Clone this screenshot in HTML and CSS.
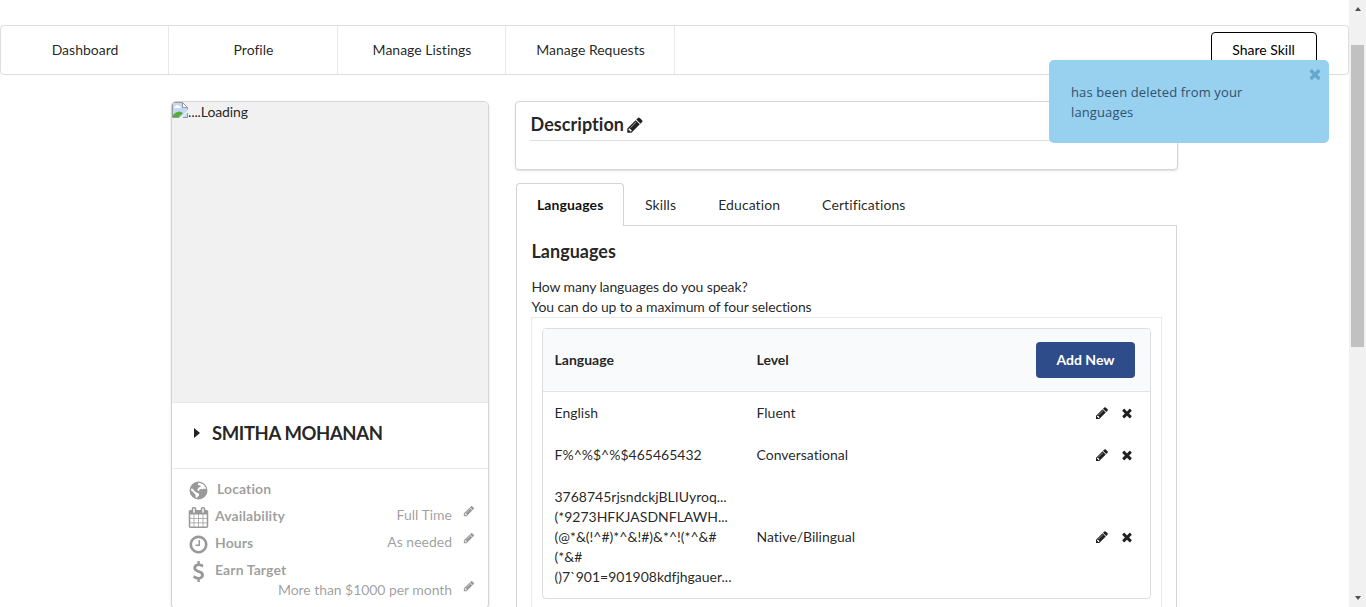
FILE: index.html
```html
<!DOCTYPE html>
<html lang="en">
<head>
<meta charset="utf-8">
<title>Profile</title>
<link rel="stylesheet" href="styles.css">
</head>
<body>
<svg class="defs" aria-hidden="true">
  <symbol id="pencil" viewBox="0 0 1792 1792"><path d="M491 1536l91-91-235-235-91 91v107h128v128h107zm523-928q0-22-22-22-10 0-17 7l-542 542q-7 7-7 17 0 22 22 22 10 0 17-7l542-542q7-7 7-17zm-54-192l416 416-832 832h-416v-416zm683 96q0 53-37 90l-166 166-416-416 166-165q36-38 90-38 53 0 91 38l235 234q37 39 37 91z"/></symbol>
  <symbol id="times" viewBox="0 0 1792 1792"><path d="M1490 1322q0 40-28 68l-136 136q-28 28-68 28t-68-28l-294-294-294 294q-28 28-68 28t-68-28l-136-136q-28-28-28-68t28-68l294-294-294-294q-28-28-28-68t28-68l136-136q28-28 68-28t68 28l294 294 294-294q28-28 68-28t68 28l136 136q28 28 28 68t-28 68l-294 294 294 294q28 28 28 68z"/></symbol>
  <symbol id="clock" viewBox="0 0 1792 1792"><path d="M1024 544v448q0 14-9 23t-23 9h-320q-14 0-23-9t-9-23v-64q0-14 9-23t23-9h224v-352q0-14 9-23t23-9h64q14 0 23 9t9 23zm416 352q0-148-73-273t-198-198-273-73-273 73-198 198-73 273 73 273 198 198 273 73 273-73 198-198 73-273zm224 0q0 209-103 385.5t-279.5 279.5-385.5 103-385.5-103-279.5-279.5-103-385.5 103-385.5 279.5-279.5 385.5-103 385.5 103 279.5 279.5 103 385.5z"/></symbol>
  <symbol id="calendar" viewBox="0 0 1792 1792"><path d="M192 1664h288v-288h-288v288zm352 0h320v-288h-320v288zm-352-352h288v-320h-288v320zm352 0h320v-320h-320v320zm-352-384h288v-288h-288v288zm736 736h320v-288h-320v288zm-384-736h320v-288h-320v288zm768 736h288v-288h-288v288zm-384-352h320v-320h-320v320zm-352-864v-288q0-13-9.5-22.5t-22.5-9.5h-64q-13 0-22.5 9.5t-9.5 22.5v288q0 13 9.5 22.5t22.5 9.5h64q13 0 22.5-9.5t9.5-22.5zm736 864h288v-320h-288v320zm-384-384h320v-288h-320v288zm384 0h288v-288h-288v288zm32-480v-288q0-13-9.5-22.5t-22.5-9.5h-64q-13 0-22.5 9.5t-9.5 22.5v288q0 13 9.5 22.5t22.5 9.5h64q13 0 22.5-9.5t9.5-22.5zm384-64v1280q0 52-38 90t-90 38h-1408q-52 0-90-38t-38-90v-1280q0-52 38-90t90-38h128v-96q0-66 47-113t113-47h64q66 0 113 47t47 113v96h384v-96q0-66 47-113t113-47h64q66 0 113 47t47 113v96h128q52 0 90 38t38 90z"/></symbol>
  <symbol id="dollar" viewBox="0 0 1792 1792"><path d="M1362 1185q0 153-99.5 263.5t-258.5 136.5v175q0 14-9 23t-23 9h-135q-13 0-22.5-9.5t-9.5-22.5v-175q-66-9-127.5-31t-101.5-44.5-74-48-46.5-37.5-17.5-18q-17-21-2-41l103-135q7-10 23-12 15-2 24 9l2 2q113 99 243 125 37 8 74 8 81 0 142.5-43t61.5-122q0-28-15-53t-33.5-42-58.5-37.5-66-32-80-32.5q-39-16-61.5-25t-61.5-26.5-62.5-31-56.5-35.5-53.5-42.5-43.5-49-35.5-58-21-66.5-8.5-78q0-138 98-242t255-134v-180q0-13 9.5-22.5t22.5-9.5h135q14 0 23 9t9 23v176q57 6 110.5 23t87 33.5 63.5 37.5 39 29 15 14q17 18 5 38l-81 146q-8 15-23 16-14 3-27-7-3-3-14.5-12t-39-26.5-58.5-32-74.5-26-85.5-11.5q-95 0-155 43t-60 111q0 26 8.5 48t29.5 41.5 39.5 33 56 31 60.5 27 70 27.5q53 20 81 31.5t76 35 75.5 42.5 62 50 53 63.5 31.5 76.5 13 94z"/></symbol>
  <symbol id="globe" viewBox="0 0 21 21"><path fill-rule="evenodd" d="M10.500 1.500a9 9 0 1 0 0 18a9 9 0 1 0 0-18zM10.500 2.800L13 3.300L16 5L18 8L17.500 9.200L15.800 8.500L14.500 9.500L13.200 8.800L11.500 9.500L11 11L9.500 10.500L9.800 8.800L11.200 7.200L12.800 6.500L12 5.200L10.800 5.500L9.800 4.500zM3.500 8.200L5.300 9.200L6.500 11.200L9 12.700L11.200 13.800L11 15.500L9.700 16.800L9 18L7.800 17.500L7.500 15L6 13L4.500 11.500L3 10.500z"/></symbol>
</svg>

<div class="window">
  <div class="page">
    <nav class="menu">
      <a class="menu-item">Dashboard</a>
      <a class="menu-item">Profile</a>
      <a class="menu-item">Manage Listings</a>
      <a class="menu-item">Manage Requests</a>
      <div class="menu-right"><button class="share">Share Skill</button></div>
    </nav>

    <div class="columns">
      <aside class="card">
        <div class="photo">
          <svg class="broken" width="16" height="16" viewBox="0 0 16 16"><path fill="#c3d7f7" d="M.5.5h10l5 5v10H.5z"/><path fill="#fff" d="M2 6q0-2 2-2 1-2 3 0 2 0 2 2zM10.500.5l5 5h-5z"/><path fill="#53ad36" d="M1 15v-2q4-5 8-3l2 1-4 4z"/><path fill="#f1f1f1" d="M8 16l8-8v2l-6 6z"/><path fill="none" stroke="#999" d="M.5 15.500V.5h10l5 5v2M10.500.5v5h5M.5 15.500H7M11 15.500h4.500V11"/></svg><span>....Loading</span>
        </div>
        <div class="owner"><i class="caret"></i><span>SMITHA MOHANAN</span></div>
        <div class="facts">
          <div class="fact"><svg class="fact-icon"><use href="#globe"/></svg><b class="first">Location</b></div>
          <div class="fact"><svg class="fact-icon"><use href="#calendar"/></svg><b>Availability</b><span class="value">Full Time</span><svg class="edit"><use href="#pencil"/></svg></div>
          <div class="fact"><svg class="fact-icon"><use href="#clock"/></svg><b>Hours</b><span class="value">As needed</span><svg class="edit"><use href="#pencil"/></svg></div>
          <div class="fact earn"><svg class="fact-icon"><use href="#dollar"/></svg><b>Earn Target</b></div>
          <div class="fact target"><span class="value">More than $1000 per month</span><svg class="edit"><use href="#pencil"/></svg></div>
        </div>
      </aside>

      <main class="main">
        <section class="description">
          <h3>Description<svg class="title-pencil"><use href="#pencil"/></svg></h3>
        </section>
        <div class="tabs">
          <a class="tab active">Languages</a>
          <a class="tab">Skills</a>
          <a class="tab">Education</a>
          <a class="tab">Certifications</a>
        </div>
        <section class="panel">
          <h3>Languages</h3>
          <p>How many languages do you speak?<br>You can do up to a maximum of four selections</p>
          <div class="frame">
            <div class="table">
              <div class="row head"><span>Language</span><span>Level</span><button class="add">Add New</button></div>
              <div class="row"><span>English</span><span>Fluent</span><span class="actions"><svg><use href="#pencil"/></svg><svg><use href="#times"/></svg></span></div>
              <div class="row"><span>F%^%$^%$465465432</span><span>Conversational</span><span class="actions"><svg><use href="#pencil"/></svg><svg><use href="#times"/></svg></span></div>
              <div class="row"><span>3768745rjsndckjBLIUyroq...<br>(*9273HFKJASDNFLAWH...<br>(@*&amp;(!^#)*^&amp;!#)&amp;*^!(*^&amp;#<br>(*&amp;#<br>()7`901=901908kdfjhgauer...</span><span>Native/Bilingual</span><span class="actions"><svg><use href="#pencil"/></svg><svg><use href="#times"/></svg></span></div>
            </div>
          </div>
        </section>
      </main>
    </div>
  </div>

  <div class="scrollbar">
    <i class="arrow up"></i>
    <div class="track"><div class="thumb"></div></div>
    <i class="arrow down"></i>
  </div>
</div>

<div class="toast"><p>has been deleted from your<br>languages</p><svg class="toast-close"><use href="#times"/></svg></div>
</body>
</html>
```
FILE: styles.css
```css
* { box-sizing: border-box; }
body { margin: 0; background: #fff; color: rgba(0,0,0,.87); font: 14px/20px Lato, sans-serif; font-variant-ligatures: none; overflow: hidden; }
svg { fill: currentColor; flex: none; }
.defs { display: none; }
h3, p { margin: 0; }
button { font-family: inherit; font-size: 14px; padding: 0; }

.window { display: flex; height: 607px; overflow: hidden; }
.page { width: 1349px; height: 607px; padding-top: 25px; overflow: hidden; }

.menu { display: flex; height: 50px; border: 1px solid rgba(34,36,38,.15); border-radius: 4px; }
.menu-item { width: 168px; border-right: 1px solid rgba(34,36,38,.1); display: flex; align-items: center; justify-content: center; padding-left: 1px; }
.menu-item:nth-child(even) { width: 169px; }
.menu-right { flex: 1; display: flex; justify-content: flex-end; align-items: center; padding-right: 31px; }
.share { width: 106px; height: 36px; border: 1px solid #000; border-radius: 4px; background: #fff; color: #000; padding: 0 1px 2px 0; }

.columns { display: flex; gap: 26px; margin: 26px 0 0 171px; align-items: flex-start; }
.card { width: 318px; height: 508px; border: 1px solid #d4d4d5; border-radius: 5px; box-shadow: 0 1px 2px 0 #d4d4d5; overflow: hidden; }
.photo { height: 300px; background: #f1f1f1; display: flex; align-items: flex-start; letter-spacing: -.1px; }
.broken { width: 16px; height: 16px; }
.owner { height: 66px; border-top: 1px solid rgba(34,36,38,.1); padding: 0 0 5px 22px; display: flex; align-items: center; gap: 12px; font-size: 18.500px; font-weight: 700; letter-spacing: -.4px; }
.caret { border: 5px solid transparent; border-left: 6px solid #222; border-right: 0; }
.facts { border-top: 1px solid rgba(34,36,38,.1); padding: 7px 13px 0 17px; color: rgba(0,0,0,.4); }
.fact { display: flex; align-items: center; height: 27px; }
.fact-icon { width: 21px; height: 21px; margin: 1px 6px 0 -1px; }
.fact b { margin-bottom: 2px; letter-spacing: .1px; }
.fact .first { margin-left: 2px; }
.value { margin: -4px 11px 0 auto; }
.edit { width: 12px; height: 12px; margin-bottom: 12px; }
.target { height: 20px; margin-top: -4px; }
.target .value { margin-top: 0; letter-spacing: -.06px; }
.target .edit { margin-bottom: 8px; }

.main { width: 663px; }
.description { height: 69px; border: 1px solid #d4d4d5; border-radius: 4px; box-shadow: 0 1px 2px 0 rgba(34,36,38,.15); padding: 10px 15px 0 14px; }
.description h3 { height: 29px; border-bottom: 1px solid rgba(34,36,38,.15); display: flex; align-items: flex-start; line-height: 24px; gap: 2px; padding-left: .500px; letter-spacing: .06px; }
h3 { font-size: 18px; font-weight: 700; }
.title-pencil { width: 18px; height: 18px; margin-top: 4px; }

.tabs { display: flex; height: 43px; margin: 13px 1px 0; border-bottom: 1px solid #d4d4d5; }
.tab { height: 43px; padding: 12px 21px 0; letter-spacing: .09px; }
.tab.active { width: 108px; border: 1px solid #d4d4d5; border-bottom: 0; border-radius: 4px 4px 0 0; background: #fff; padding: 11px 20px 0; font-weight: 700; color: rgba(0,0,0,.95); }
.panel { height: 420px; margin: 0 1px; border: 1px solid #d4d4d5; border-top: 0; padding: 13px 14px 0; }
.panel h3 { line-height: 24px; margin-bottom: 14px; }
.panel h3, .panel p { padding-left: .500px; }
.panel p { letter-spacing: -.14px; }
.frame { border: 1px solid rgba(34,36,38,.1); height: 310px; padding: 10px; }
.table { border: 1px solid rgba(34,36,38,.15); border-radius: 4px; overflow: hidden; }
.row { display: grid; grid-template-columns: 202px 1fr 99px; align-items: center; padding: 11px 15px 11px 11.500px; }
.row.head { height: 63px; padding-bottom: 12px; background: #f9fafb; border-bottom: 1px solid rgba(34,36,38,.1); font-weight: 700; }
.add { height: 36px; border: 0; border-radius: 4px; background: #2f4c8a; color: #fff; font-weight: 700; }
.actions { display: flex; justify-content: flex-end; gap: 11px; padding-right: 1px; }
.actions svg { width: 14px; height: 14px; }

.scrollbar { width: 17px; background: #f1f1f1; display: flex; flex-direction: column; align-items: center; }
.arrow { border: 3.500px solid transparent; }
.arrow.up { border-bottom: 4px solid #505050; border-top: 0; margin: 7px 0 6px; }
.arrow.down { border-top: 4px solid #505050; border-bottom: 0; margin: 6px 0 7px; }
.track { flex: 1; padding-top: 28px; }
.thumb { width: 13px; height: 302px; background: #c1c1c1; }

.toast { position: absolute; left: 1049px; top: 60px; width: 280px; height: 83px; border-radius: 5px; background: #98d1f0; color: #31506e; padding: 22px; font: 13px/20px "Open Sans", sans-serif; letter-spacing: .12px; }
.toast-close { position: absolute; right: 6px; top: 6px; width: 16px; height: 16px; color: #66a7cd; }
```
